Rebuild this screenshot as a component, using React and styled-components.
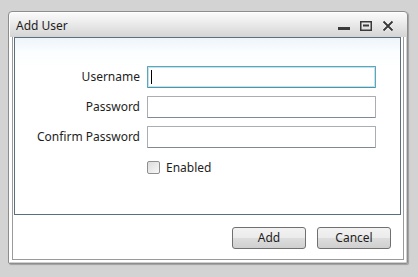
import React from 'react'
import styled, { createGlobalStyle } from 'styled-components'

const GlobalStyle = createGlobalStyle`
html, body {
  margin: 0;
  padding: 0;
  background: #d3d3d3;
  font-family: "Noto Sans", "Liberation Sans", sans-serif;
}
`

const Page = styled.div`
width: 418px;
height: 277px;
padding: 11px 0 0 8px;
box-sizing: border-box;
`

const Window = styled.div`
width: 400px;
height: 253px;
box-sizing: border-box;
border: 1px solid #8d8d8d;
border-radius: 4px 4px 2px 2px;
background: linear-gradient(#fbfbfb 0px, #f0f0f0 8px, #d6d6d6 24px, #cfcfcf 26px);
box-shadow: 1px 1px 1px rgba(0,0,0,0.25), inset 1px 1px 0 #ffffff;
display: flex;
flex-direction: column;
`

const TitleBar = styled.div`
height: 25px;
display: flex;
align-items: center;
padding: 2px 0 0 7px;
box-sizing: border-box;
`

const Title = styled.div`
flex: 1;
font-size: 12px;
color: #1e1e1e;
`

const Controls = styled.div`
display: flex;
align-items: center;
margin-right: 8px;
`

const CtrlButton = styled.div`
width: 22px;
height: 16px;
display: flex;
align-items: center;
justify-content: center;
`

const Body = styled.div`
flex: 1;
background: #ffffff;
margin: 0 1px 1px 1px;
padding: 0 2px 2px 2px;
display: flex;
`

const Frame = styled.div`
flex: 1;
border: 1px solid #9a9a9a;
border-top: none;
display: flex;
flex-direction: column;
`

const Panel = styled.div`
height: 178px;
box-sizing: border-box;
border: 1px solid #5d6f7c;
margin: 0 2px 0 1px;
background: linear-gradient(#eef5fa 0px, #fbfdfe 14px, #ffffff 30px);
padding: 28px 0 0 0;
`

const Form = styled.div`
display: grid;
grid-template-columns: 125px 229px;
column-gap: 7px;
row-gap: 8px;
`

const Label = styled.label`
font-size: 12px;
color: #1e1e1e;
text-align: right;
line-height: 22px;
`

const Input = styled.div`
height: 22px;
box-sizing: border-box;
border: 1px solid ${p => (p.focused ? '#5aa7ba' : '#abadb3')};
border-bottom-color: ${p => (p.focused ? '#4d95a8' : '#7f8a94')};
box-shadow: ${p => (p.focused ? 'inset 0 0 0 1px #c4e3ec' : 'none')};
border-radius: 1px;
background: #ffffff;
display: flex;
align-items: center;
padding-left: 3px;
`

const Caret = styled.div`
width: 1px;
height: 14px;
background: #000;
`

const CheckRow = styled.div`
grid-column: 2;
display: flex;
align-items: center;
gap: 6px;
margin-top: 3px;
`

const Box = styled.div`
width: 13px;
height: 13px;
box-sizing: border-box;
border: 1px solid #8e8f8f;
border-radius: 2px;
background: linear-gradient(135deg, #dcdcdc, #f8f8f8);
`

const CheckText = styled.span`
font-size: 12px;
color: #1e1e1e;
`

const Footer = styled.div`
flex: 1;
display: flex;
justify-content: flex-end;
align-items: center;
gap: 11px;
padding: 0 12px 0 0;
`

const Button = styled.button`
width: 74px;
height: 22px;
border: 1px solid #707070;
border-radius: 3px;
background: linear-gradient(#f2f2f2 0%, #ebebeb 50%, #dddddd 51%, #cfcfcf 100%);
font-family: "Noto Sans", "Liberation Sans", sans-serif;
font-size: 12px;
color: #1e1e1e;
padding: 0;
margin-top: 1px;
`

const App = () => {
  return (
    <>
      <GlobalStyle />
      <Page>
        <Window>
          <TitleBar>
            <Title>Add User</Title>
            <Controls>
              <CtrlButton>
                <svg width="12" height="12" viewBox="0 0 12 12">
                  <rect x="0" y="7" width="12" height="3" fill="#3a3a3a" />
                </svg>
              </CtrlButton>
              <CtrlButton>
                <svg width="12" height="10" viewBox="0 0 12 10">
                  <rect x="0.75" y="0.75" width="10.5" height="8.5" fill="none" stroke="#3a3a3a" strokeWidth="1.5" />
                  <rect x="3" y="3.5" width="6" height="2" fill="#3a3a3a" />
                </svg>
              </CtrlButton>
              <CtrlButton>
                <svg width="12" height="12" viewBox="0 0 12 12">
                  <path d="M1.5 1.5 L10.5 10.5 M10.5 1.5 L1.5 10.5" stroke="#ffffff" strokeWidth="3.4" />
                  <path d="M1.5 1.5 L10.5 10.5 M10.5 1.5 L1.5 10.5" stroke="#3a3a3a" strokeWidth="2" />
                </svg>
              </CtrlButton>
            </Controls>
          </TitleBar>
          <Body>
            <Frame>
              <Panel>
                <Form>
                  <Label>Username</Label>
                  <Input focused>
                    <Caret />
                  </Input>
                  <Label>Password</Label>
                  <Input />
                  <Label>Confirm Password</Label>
                  <Input />
                  <CheckRow>
                    <Box />
                    <CheckText>Enabled</CheckText>
                  </CheckRow>
                </Form>
              </Panel>
              <Footer>
                <Button>Add</Button>
                <Button>Cancel</Button>
              </Footer>
            </Frame>
          </Body>
        </Window>
      </Page>
    </>
  )
}

export default App
